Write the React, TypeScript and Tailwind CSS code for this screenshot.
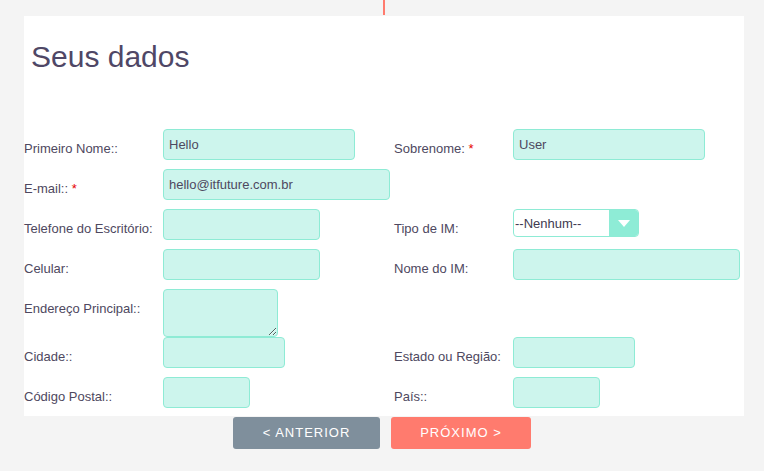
import React from "react";

type Field = {
  label: string;
  required?: boolean;
  value?: string;
  width: string;
  kind?: "input" | "select" | "textarea";
};

type Row = {
  left: Field;
  right?: Field;
  last?: boolean;
};

const rows: Row[] = [
  {
    left: { label: "Primeiro Nome::", value: "Hello", width: "w-[192px]" },
    right: { label: "Sobrenome:", required: true, value: "User", width: "w-[192px]" },
  },
  {
    left: { label: "E-mail::", required: true, value: "hello@itfuture.com.br", width: "w-[227px]" },
  },
  {
    left: { label: "Telefone do Escritório:", width: "w-[157px]" },
    right: { label: "Tipo de IM:", width: "w-[126px]", kind: "select" },
  },
  {
    left: { label: "Celular:", width: "w-[157px]" },
    right: { label: "Nome do IM:", width: "w-[227px]" },
  },
  {
    left: { label: "Endereço Principal::", width: "w-[115px]", kind: "textarea" },
  },
  {
    left: { label: "Cidade::", width: "w-[122px]" },
    right: { label: "Estado ou Região:", width: "w-[122px]" },
  },
  {
    left: { label: "Código Postal::", width: "w-[87px]" },
    right: { label: "País::", width: "w-[87px]" },
    last: true,
  },
];

function Control({ field }: { field: Field }) {
  if (field.kind === "select") {
    return (
      <div
        className={`${field.width} h-[28px] flex rounded-[4px] border border-[#8eebd5] bg-white overflow-hidden`}
      >
        <div className="flex-1 flex items-center pl-[1px] pt-[1px] text-[13px] text-[#3f3a4f]">
          --Nenhum--
        </div>
        <div className="w-[29px] bg-[#8eecd6] flex items-center justify-center">
          <svg width="12" height="7" viewBox="0 0 12 7">
            <path d="M0 0 L12 0 L6 7 Z" fill="#ffffff" />
          </svg>
        </div>
      </div>
    );
  }
  if (field.kind === "textarea") {
    return (
      <textarea
        className={`${field.width} h-[48px] block rounded-[4px] border border-[#8eebd5] bg-[#cdf5ed] outline-none`}
      />
    );
  }
  return (
    <input
      readOnly
      value={field.value ?? ""}
      className={`${field.width} h-[31px] block rounded-[4px] border border-[#8eebd5] bg-[#cdf5ed] px-[5px] text-[13px] text-[#4e4860] outline-none`}
    />
  );
}

function Label({ field, width }: { field: Field; width: string }) {
  return (
    <div className={`${width} shrink-0 pt-[12px] leading-4 text-[13px] text-[#4e4860]`}>
      {field.label}
      {field.required && <span className="text-[#e60000]"> *</span>}
    </div>
  );
}

export default function App() {
  return (
    <div
      className="min-h-[471px] bg-[#f4f4f4] font-['Liberation_Sans',Arial,sans-serif]"
    >
      <div className="h-[16px] flex justify-center">
        <div className="ml-[4px] w-[2px] h-[15px] bg-[#ff7b6e]" />
      </div>

      <div className="ml-[24px] w-[720px] bg-white pb-[8px]">
        <h1 className="pt-[23px] pl-[7px] text-[30px] leading-[36px] text-[#4f4766]">
          Seus dados
        </h1>

        <div className="mt-[54px]">
          {rows.map((row, i) => (
            <div
              key={i}
              className={`flex items-start ${
                row.left.kind === "textarea" || row.last ? "" : "mb-[9px]"
              }`}
            >
              <div className="w-[370px] flex items-start shrink-0">
                <Label field={row.left} width="w-[139px]" />
                <Control field={row.left} />
              </div>
              {row.right && (
                <div className="flex items-start">
                  <Label field={row.right} width="w-[119px]" />
                  <Control field={row.right} />
                </div>
              )}
            </div>
          ))}
        </div>
      </div>

      <div className="flex justify-center gap-[11px] pt-[1px]">
        <button className="w-[147px] h-[32px] rounded-[3px] bg-[#7f8f9c] text-white text-[13px] tracking-[1px]">
          &lt; ANTERIOR
        </button>
        <button className="w-[140px] h-[32px] rounded-[3px] bg-[#ff7b6e] text-white text-[13px] tracking-[1px]">
          PRÓXIMO &gt;
        </button>
      </div>
    </div>
  );
}
